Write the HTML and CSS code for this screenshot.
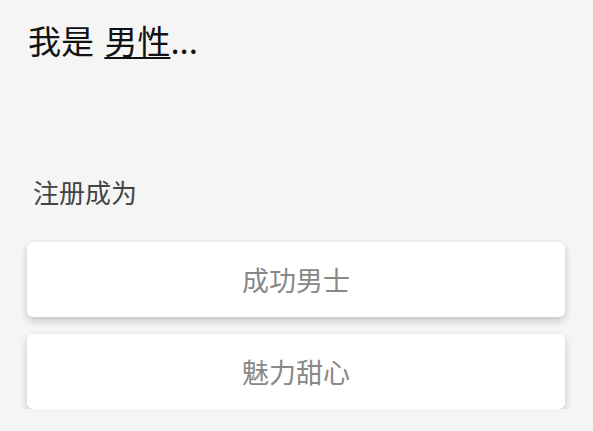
FILE: index.html
```html
<!DOCTYPE html>
<html lang="zh">
<head>
    <meta charset="UTF-8">
    <meta name="viewport" content="width=device-width, initial-scale=1.0">
    <title>注册</title>
    <link rel="stylesheet" href="styles.css">
</head>
<body>
    <div class="page">
        <h1 class="intro">我是 <span class="gender">男性</span>...</h1>

        <p class="label">注册成为</p>

        <div class="choices">
            <button class="choice" type="button">成功男士</button>
            <button class="choice" type="button">魅力甜心</button>
        </div>
    </div>
</body>
</html>
```

FILE: styles.css
```css
body {
    margin: 0;
    background-color: #f5f5f5;
    font-family: "Noto Sans CJK SC", "Noto Sans", sans-serif;
}

.page {
    padding: 20px 28px 0 27px;
}

.intro {
    margin: 0 0 0 1px;
    font-size: 33px;
    font-weight: 400;
    line-height: 40px;
    color: #111;
}

.gender {
    margin-left: 3px;
    text-decoration: underline;
    text-decoration-thickness: 2px;
    text-underline-offset: 3px;
}

.label {
    margin: 114px 0 0 6px;
    font-size: 26px;
    line-height: 36px;
    color: #444;
}

.choices {
    display: flex;
    flex-direction: column;
    gap: 17px;
    margin-top: 32px;
}

.choice {
    height: 75px;
    border: none;
    border-radius: 6px;
    background-color: #fff;
    box-shadow: 0 4px 9px rgba(0, 0, 0, 0.2);
    font-family: inherit;
    font-size: 27px;
    color: #888;
    cursor: pointer;
}
```
